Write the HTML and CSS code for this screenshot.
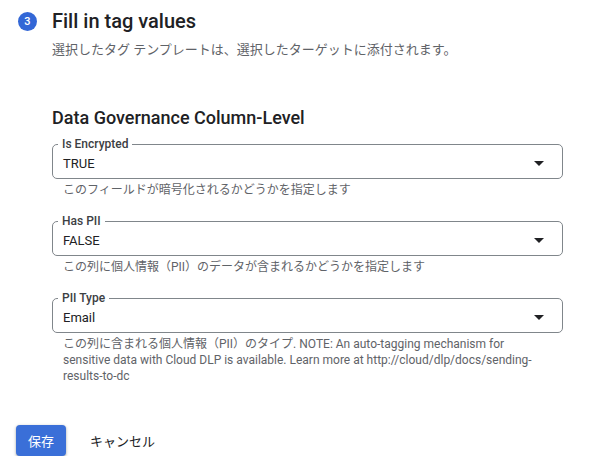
FILE: index.html
```html
<!DOCTYPE html>
<html lang="ja">
<head>
<meta charset="utf-8">
<title>Fill in tag values</title>
<link rel="stylesheet" href="styles.css">
</head>
<body>
<div class="page">
  <div class="step-header">
    <span class="step-num">3</span>
    <h1 class="title">Fill in tag values</h1>
  </div>
  <div class="step-body">
    <p class="subtitle">選択したタグ テンプレートは、選択したターゲットに添付されます。</p>
    <h2 class="section-title">Data Governance Column-Level</h2>

    <div class="field">
      <fieldset class="outline">
        <legend class="label">Is Encrypted</legend>
        <div class="select">
          <span class="value">TRUE</span>
          <span class="arrow"></span>
        </div>
      </fieldset>
      <p class="helper">このフィールドが暗号化されるかどうかを指定します</p>
    </div>

    <div class="field">
      <fieldset class="outline">
        <legend class="label">Has PII</legend>
        <div class="select">
          <span class="value">FALSE</span>
          <span class="arrow"></span>
        </div>
      </fieldset>
      <p class="helper">この列に個人情報（PII）のデータが含まれるかどうかを指定します</p>
    </div>

    <div class="field">
      <fieldset class="outline">
        <legend class="label">PII Type</legend>
        <div class="select">
          <span class="value">Email</span>
          <span class="arrow"></span>
        </div>
      </fieldset>
      <p class="helper">この列に含まれる個人情報（PII）のタイプ. NOTE: An auto-tagging mechanism for sensitive data with Cloud DLP is available. Learn more at http://cloud/dlp/docs/sending-results-to-dc</p>
    </div>
  </div>
  <div class="actions">
    <button class="btn btn-primary" type="button">保存</button>
    <button class="btn btn-text" type="button">キャンセル</button>
  </div>
</div>
</body>
</html>
```

FILE: styles.css
```css
* { box-sizing: border-box; }

body {
  margin: 0;
  background: #ffffff;
  color: #202124;
  font-family: Roboto, "Noto Sans CJK JP", sans-serif;
}

.page {
  padding: 9px 49px 0 16px;
}

.step-header {
  display: flex;
  align-items: center;
  gap: 15px;
  margin-left: 2px;
}

.step-num {
  width: 19px;
  height: 19px;
  border-radius: 50%;
  background: #3367d6;
  color: #ffffff;
  font-size: 11px;
  font-weight: 500;
  display: flex;
  align-items: center;
  justify-content: center;
  flex-shrink: 0;
}

.title {
  margin: 0;
  font-size: 20px;
  font-weight: 500;
  line-height: 24px;
}

.step-body {
  margin-left: 36px;
}

.subtitle {
  margin: 7px 0 0;
  font-size: 13px;
  line-height: 20px;
  color: #5f6368;
}

.section-title {
  margin: 46px 0 0;
  font-size: 18px;
  font-weight: 500;
  line-height: 24px;
}

.field {
  margin-top: 8px;
}

.field + .field {
  margin-top: 17px;
}

.outline {
  margin: 0;
  padding: 0 10px 0 10px;
  border: 1px solid #80868b;
  border-radius: 5px;
  min-inline-size: 0;
}

.label {
  margin-left: -5px;
  padding: 0 4px;
  font-size: 12px;
  font-weight: 500;
  line-height: 13px;
  color: #3c4043;
}

.select {
  display: flex;
  align-items: center;
  justify-content: space-between;
  height: 27px;
  padding-bottom: 3px;
}

.value {
  font-size: 13px;
  color: #202124;
}

.arrow {
  width: 0;
  height: 0;
  border-left: 5px solid transparent;
  border-right: 5px solid transparent;
  border-top: 5px solid #202124;
  margin-right: 8px;
}

.helper {
  margin: 3px 0 0;
  padding: 0 16px 0 11px;
  font-size: 12px;
  line-height: 16px;
  color: #5f6368;
}

.actions {
  display: flex;
  align-items: center;
  gap: 12px;
  margin-top: 41px;
}

.btn {
  font-family: Roboto, "Noto Sans CJK JP", sans-serif;
  font-size: 13px;
  height: 31px;
  border-radius: 4px;
  border: none;
  cursor: pointer;
}

.btn-primary {
  width: 50px;
  background: #3a6fd8;
  color: #ffffff;
  box-shadow: 0 1px 2px rgba(60, 64, 67, 0.3), 0 1px 3px 1px rgba(60, 64, 67, 0.15);
}

.btn-text {
  background: transparent;
  color: #202124;
  padding: 0 12px;
}
```
